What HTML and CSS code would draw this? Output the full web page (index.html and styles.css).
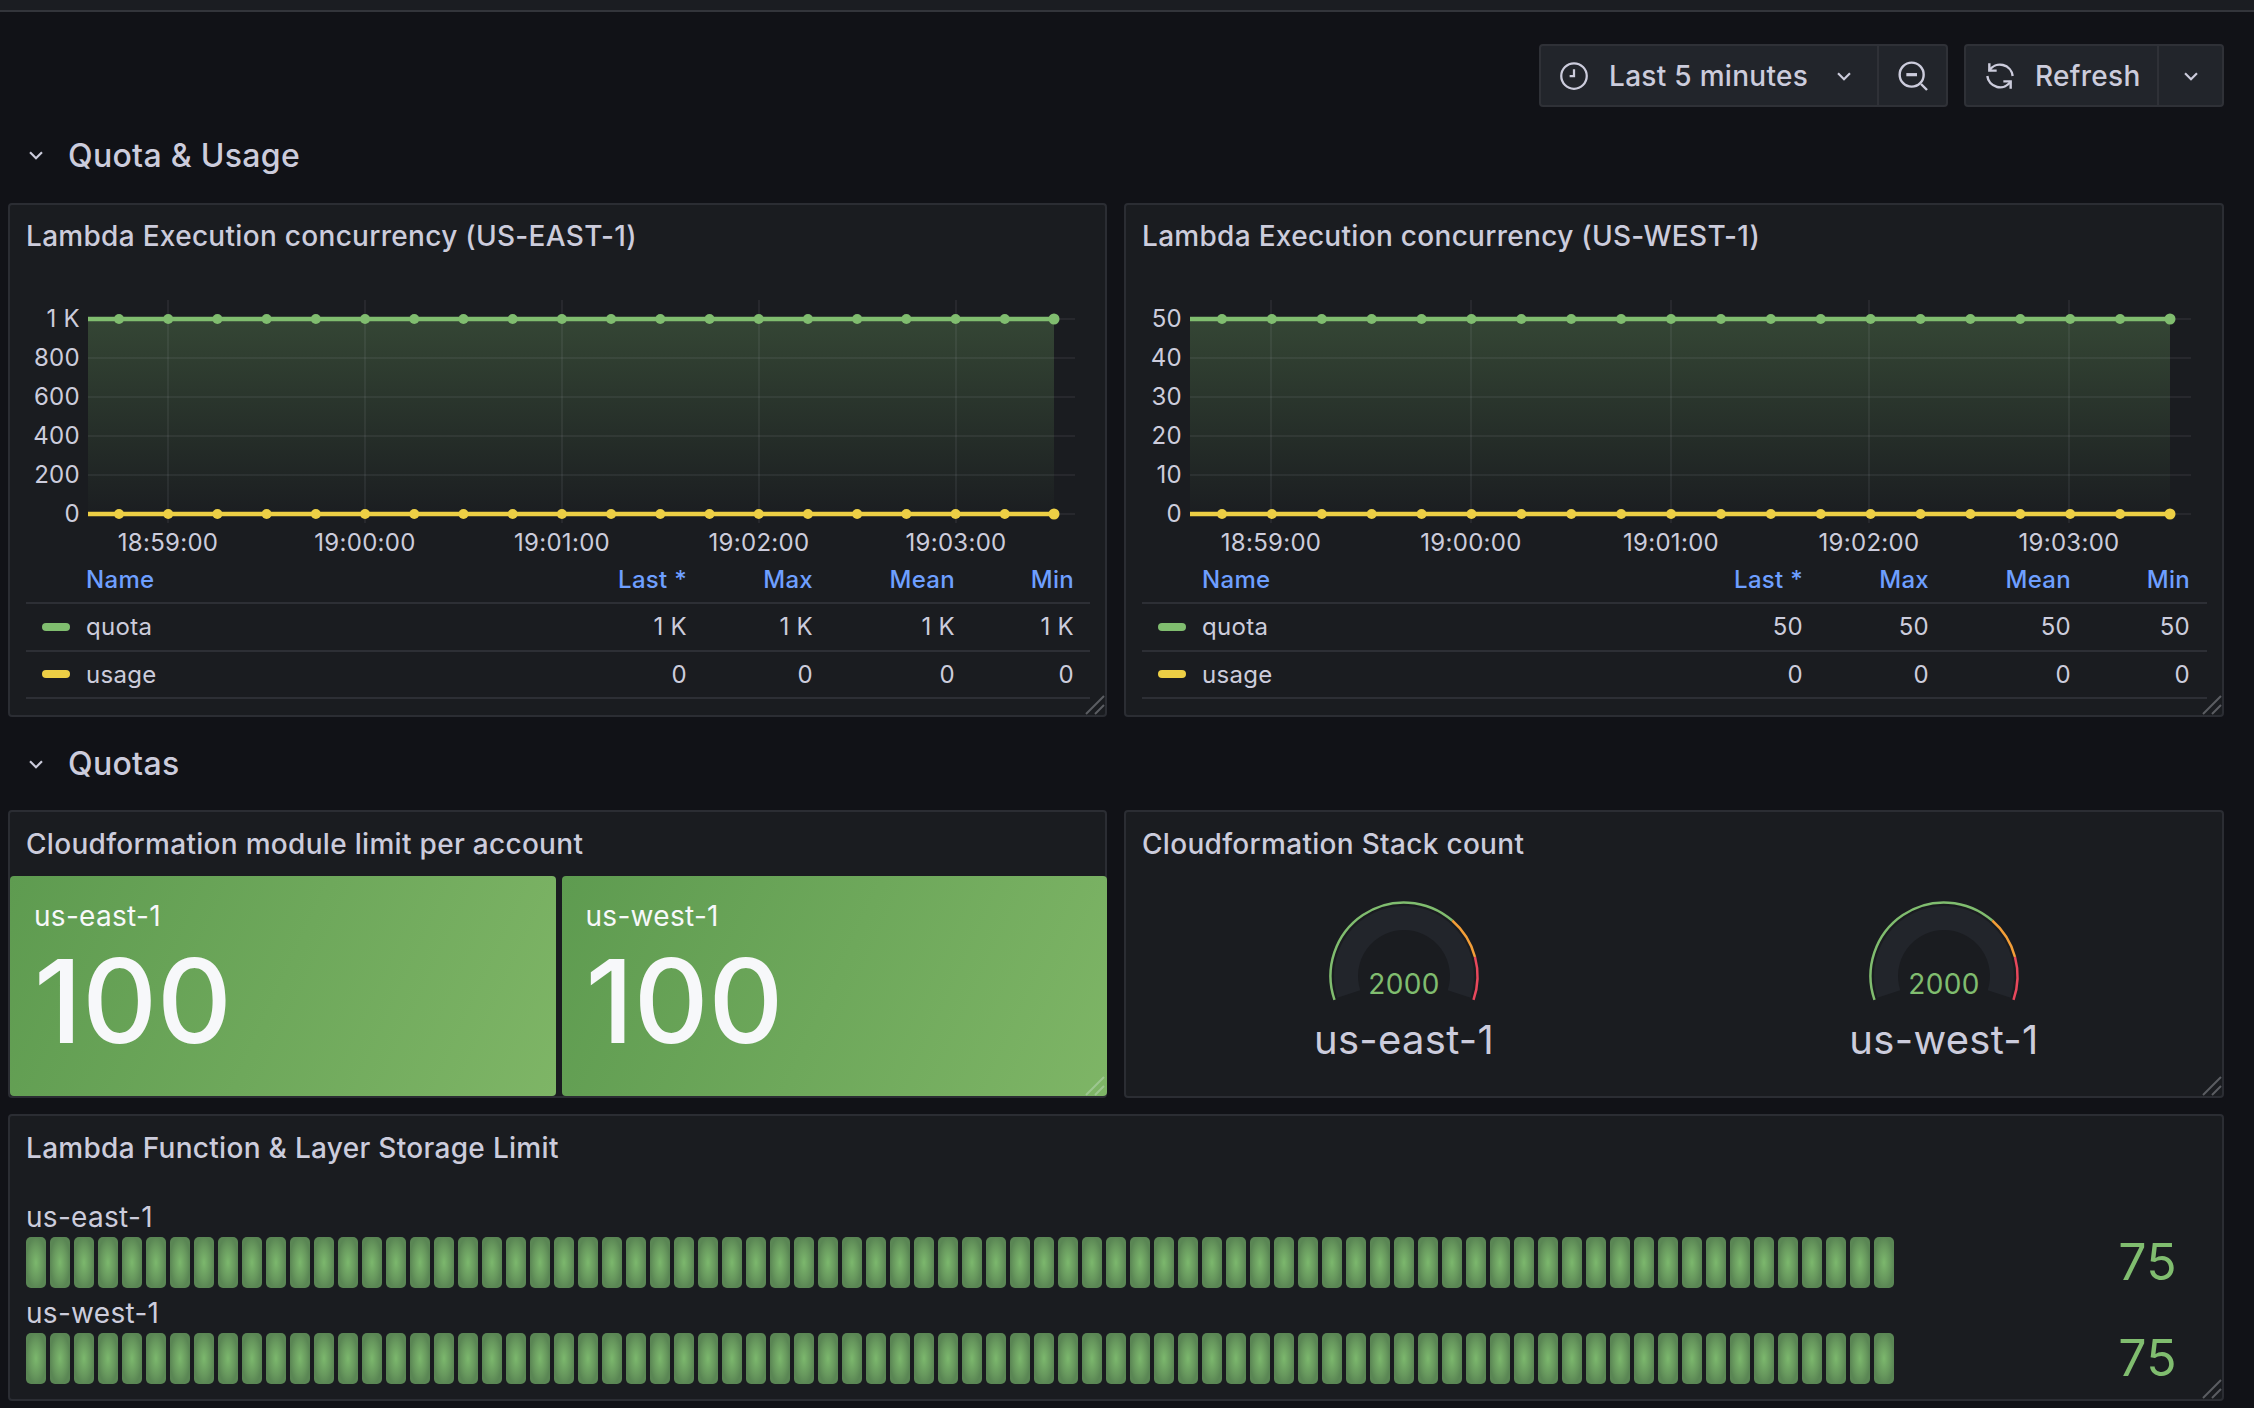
FILE: index.html
```html
<!DOCTYPE html>
<html lang="en">
<head>
    <meta charset="UTF-8">
    <title>Lambda Quotas</title>
    <link rel="stylesheet" href="styles.css">
</head>
<body>
    <div class="topbar"></div>

    <div class="page">
        <div class="toolbar">
            <div class="btn-group">
                <div class="btn btn-time">
                    <svg class="icon clock" viewBox="0 0 24 24"><circle cx="12" cy="12" r="10.200"/><path d="M12 6.500V12H8.500"/></svg>
                    <span>Last 5 minutes</span>
                    <svg class="chev chev-time" viewBox="0 0 24 24"><path d="M6.500 9.500 12 15l5.500-5.500"/></svg>
                </div>
                <div class="btn btn-zoom">
                    <svg class="icon" viewBox="0 0 24 24"><circle cx="11" cy="11" r="9"/><path d="M18 18l4.500 4.500"/><path class="thick" d="M7 11h8"/></svg>
                </div>
            </div>
            <div class="btn-group">
                <div class="btn btn-refresh">
                    <svg class="icon" viewBox="0 0 24 24"><path d="M4 2.500V8h5.500"/><path d="M4 8a9.500 9.500 0 0 1 17.500 4"/><path d="M20 21.500V16h-5.500"/><path d="M20 16A9.500 9.500 0 0 1 2.500 12"/></svg>
                    <span>Refresh</span>
                </div>
                <div class="btn btn-more">
                    <svg class="chev" viewBox="0 0 24 24"><path d="M6.500 9.500 12 15l5.500-5.500"/></svg>
                </div>
            </div>
        </div>

        <div class="row-title row-first">
            <svg class="chev" viewBox="0 0 24 24"><path d="M6.500 9.500 12 15l5.500-5.500"/></svg>
            <span>Quota &amp; Usage</span>
        </div>

        <div class="panel-row row-charts">
            <div class="panel">
                <div class="panel-title">Lambda Execution concurrency (US-EAST-1)</div>
                <div id="chartEast"></div>
                <div class="legend">
                    <div class="legend-row legend-head"><span class="name">Name</span><span>Last *</span><span>Max</span><span>Mean</span><span>Min</span></div>
                    <div class="legend-row"><span class="name"><i class="swatch green"></i>quota</span><span>1 K</span><span>1 K</span><span>1 K</span><span>1 K</span></div>
                    <div class="legend-row"><span class="name"><i class="swatch yellow"></i>usage</span><span>0</span><span>0</span><span>0</span><span>0</span></div>
                </div>
                <svg class="resize" viewBox="0 0 20 20"><path d="M1 19 19 1M10 19l9-9"/></svg>
            </div>
            <div class="panel">
                <div class="panel-title">Lambda Execution concurrency (US-WEST-1)</div>
                <div id="chartWest"></div>
                <div class="legend legend-west">
                    <div class="legend-row legend-head"><span class="name">Name</span><span>Last *</span><span>Max</span><span>Mean</span><span>Min</span></div>
                    <div class="legend-row"><span class="name"><i class="swatch green"></i>quota</span><span>50</span><span>50</span><span>50</span><span>50</span></div>
                    <div class="legend-row"><span class="name"><i class="swatch yellow"></i>usage</span><span>0</span><span>0</span><span>0</span><span>0</span></div>
                </div>
                <svg class="resize" viewBox="0 0 20 20"><path d="M1 19 19 1M10 19l9-9"/></svg>
            </div>
        </div>

        <div class="row-title row-second">
            <svg class="chev" viewBox="0 0 24 24"><path d="M6.500 9.500 12 15l5.500-5.500"/></svg>
            <span>Quotas</span>
        </div>

        <div class="panel-row row-quotas">
            <div class="panel">
                <div class="panel-title">Cloudformation module limit per account</div>
                <div class="stats">
                    <div class="stat"><div class="stat-label">us-east-1</div><div class="stat-value">100</div></div>
                    <div class="stat"><div class="stat-label">us-west-1</div><div class="stat-value">100</div></div>
                </div>
                <svg class="resize resize-light" viewBox="0 0 20 20"><path d="M1 19 19 1M10 19l9-9"/></svg>
            </div>
            <div class="panel">
                <div class="panel-title">Cloudformation Stack count</div>
                <div class="gauges">
                    <div class="gauge"><div class="gauge-dial"></div><div class="gauge-label">us-east-1</div></div>
                    <div class="gauge"><div class="gauge-dial"></div><div class="gauge-label">us-west-1</div></div>
                </div>
                <svg class="resize" viewBox="0 0 20 20"><path d="M1 19 19 1M10 19l9-9"/></svg>
            </div>
        </div>

        <div class="panel panel-wide">
            <div class="panel-title">Lambda Function &amp; Layer Storage Limit</div>
            <div class="bar-gauge">
                <div class="bar-label">us-east-1</div>
                <div class="bar-line"><div class="segments"></div><div class="bar-value">75</div></div>
            </div>
            <div class="bar-gauge">
                <div class="bar-label">us-west-1</div>
                <div class="bar-line"><div class="segments"></div><div class="bar-value">75</div></div>
            </div>
            <svg class="resize" viewBox="0 0 20 20"><path d="M1 19 19 1M10 19l9-9"/></svg>
        </div>
    </div>

    <script src="app.js"></script>
</body>
</html>
```

FILE: styles.css
```css
* {
    box-sizing: border-box;
}
body {
    font-family: Inter, "Noto Sans", sans-serif;
    margin: 0;
    padding: 0;
    background-color: #111217;
    color: #ccccdc;
    letter-spacing: 0.3px;
    overflow: hidden;
}
svg {
    display: block;
}
.topbar {
    height: 12px;
    background-color: #1b1d22;
    border-bottom: 2px solid #33353b;
}
.page {
    padding: 0 30px 0 8px;
}

/* toolbar */
.toolbar {
    display: flex;
    justify-content: flex-end;
    gap: 16px;
    margin-top: 32px;
}
.btn-group {
    display: flex;
    height: 63px;
    background-color: #22252b;
    border: 2px solid #2f3137;
    border-radius: 4px;
    font-size: 28px;
    font-weight: 500;
}
.btn {
    display: flex;
    align-items: center;
}
.btn + .btn {
    border-left: 2px solid #2f3137;
}
.icon {
    width: 32px;
    height: 32px;
    flex: none;
    fill: none;
    stroke: #ccccdc;
    stroke-width: 1.800;
}
.icon .thick {
    stroke-width: 2.400;
}
.clock {
    width: 30px;
    height: 30px;
}
.chev {
    width: 26px;
    height: 26px;
    flex: none;
    fill: none;
    stroke: #ccccdc;
    stroke-width: 2;
}
.btn-time {
    width: 336px;
    padding-left: 18px;
    gap: 20px;
}
.chev-time {
    margin-left: 3px;
}
.btn-zoom {
    width: 69px;
    justify-content: center;
}
.btn-refresh {
    width: 191px;
    padding-left: 18px;
    gap: 19px;
}
.btn-more {
    width: 65px;
    justify-content: center;
}

/* collapsible rows */
.row-title {
    display: flex;
    align-items: center;
    gap: 19px;
    padding-left: 15px;
    font-size: 32px;
    font-weight: 500;
}
.row-first {
    height: 96px;
}
.row-second {
    height: 93px;
}

/* panels */
.panel-row {
    display: grid;
    grid-template-columns: 1099px 1100px;
    gap: 17px;
}
.row-charts .panel {
    height: 514px;
}
.row-quotas .panel {
    height: 288px;
}
.panel {
    position: relative;
    background-color: #1a1c20;
    border: 2px solid #2b2d33;
    border-radius: 4px;
}
.panel-wide {
    height: 287px;
    margin-top: 16px;
}
.panel-title {
    height: 64px;
    padding: 16px 0 0 16px;
    font-size: 28px;
    line-height: 30px;
    font-weight: 500;
}
.row-quotas .panel-title,
.panel-wide .panel-title {
    padding-top: 17px;
}
.panel-wide .panel-title {
    height: 65px;
}
.resize {
    position: absolute;
    right: 0;
    bottom: 0;
    width: 20px;
    height: 20px;
    fill: none;
    stroke: #5b5d62;
    stroke-width: 2;
}
.resize-light {
    stroke: #9cc690;
}

/* timeseries */
.chart text {
    fill: #ccccdc;
    font-size: 24px;
}
.grid-line {
    stroke: rgba(204, 204, 220, 0.1);
    stroke-width: 1.500;
}

/* legend */
.legend {
    margin: 0 15px 0 16px;
    font-size: 24px;
}
.legend-row {
    display: grid;
    grid-template-columns: 1fr 126px 126px 142px 119px;
    height: 47.500px;
    padding-right: 16px;
    align-items: center;
    border-bottom: 2px solid #2d2f35;
    text-align: right;
}
.legend-west .legend-row {
    padding-right: 17px;
}
.legend-row .name {
    position: relative;
    padding-left: 60px;
    text-align: left;
}
.legend-head {
    height: 44px;
    padding-bottom: 4px;
    color: #6e9fff;
    font-weight: 500;
}
.swatch {
    position: absolute;
    left: 16px;
    top: 50%;
    width: 28px;
    height: 8px;
    margin-top: -4px;
    border-radius: 4px;
}
.green {
    background-color: #80bd6f;
}
.yellow {
    background-color: #edcf45;
}

/* stat */
.stats {
    display: grid;
    grid-template-columns: 1fr 1fr;
    gap: 6px;
    height: 220px;
    margin-right: -2px;
}
.stat {
    padding: 23px 0 0 24px;
    border-radius: 4px;
    background: linear-gradient(115deg, #5e9b50, #7eb566);
    color: #f7f8fa;
}
.stat-label {
    font-size: 28px;
    line-height: 34px;
}
.stat-value {
    margin-top: 9px;
    font-size: 116px;
    line-height: 118px;
    font-weight: 500;
    letter-spacing: 0;
}

/* gauge */
.gauges {
    display: grid;
    grid-template-columns: 1fr 1fr;
    padding: 0 8px;
}
.gauge {
    display: flex;
    flex-direction: column;
    align-items: center;
    padding-top: 21px;
}
.gauge-dial svg {
    width: 160px;
    height: 110px;
}
.gauge-dial .value {
    fill: #80bd6f;
    font-size: 28px;
    text-anchor: middle;
}
.gauge-label {
    margin-top: 9px;
    font-size: 40px;
    line-height: 48px;
}

/* bar gauge */
.bar-gauge {
    padding: 0 0 7px 16px;
}
.panel-title + .bar-gauge {
    padding-top: 18px;
}
.bar-label {
    height: 38px;
    font-size: 28px;
    line-height: 36px;
}
.bar-line {
    display: flex;
    align-items: center;
    justify-content: space-between;
    padding-right: 45px;
}
.segments {
    display: flex;
    gap: 4px;
}
.seg {
    width: 20px;
    height: 51px;
    border-radius: 5px;
    background: radial-gradient(closest-side, #7cb86d 0%, #68995e 65%, #5a8654 100%);
}
.bar-value {
    color: #80bd6f;
    font-size: 50px;
    line-height: 51px;
}
```

FILE: app.js
```js
const svgNS = 'http://www.w3.org/2000/svg';

function el(name, attrs, parent) {
    const node = document.createElementNS(svgNS, name);
    Object.keys(attrs).forEach(key => node.setAttribute(key, attrs[key]));
    parent.appendChild(node);
    return node;
}

// charts are drawn in page coordinates, the viewBox shifts them into the panel
function drawChart(id, opt) {
    const svg = el('svg', {
        class: 'chart', width: opt.width, height: 291,
        viewBox: `${opt.originX} 269 ${opt.width} 291`
    }, document.getElementById(id));

    const gradId = id + 'Fill';
    const grad = el('linearGradient', {id: gradId, x1: 0, y1: 0, x2: 0, y2: 1}, el('defs', {}, svg));
    el('stop', {offset: 0, 'stop-color': '#80bd6f', 'stop-opacity': 0.26}, grad);
    el('stop', {offset: 1, 'stop-color': '#80bd6f', 'stop-opacity': 0.01}, grad);

    const yTop = 319, yBottom = 514;
    el('rect', {x: opt.plotLeft, y: yTop, width: opt.lastX - opt.plotLeft, height: yBottom - yTop, fill: `url(#${gradId})`}, svg);

    opt.yLabels.forEach((label, i) => {
        const y = yTop + i * 39;
        el('line', {class: 'grid-line', x1: opt.plotLeft, x2: opt.gridRight, y1: y, y2: y}, svg);
        const t = el('text', {x: opt.plotLeft - 8, y: y + 8, 'text-anchor': 'end'}, svg);
        t.textContent = label;
    });

    opt.ticks.forEach((x, i) => {
        el('line', {class: 'grid-line', x1: x, x2: x, y1: 300, y2: 523}, svg);
        const t = el('text', {x: x, y: 551, 'text-anchor': 'middle'}, svg);
        t.textContent = ['18:59:00', '19:00:00', '19:01:00', '19:02:00', '19:03:00'][i];
    });

    [[yTop, '#80bd6f'], [yBottom, '#edcf45']].forEach(([y, color]) => {
        el('line', {x1: opt.plotLeft, x2: opt.lastX, y1: y, y2: y, stroke: color, 'stroke-width': 4.5}, svg);
        for (let i = 0; i < 20; i++) {
            const x = opt.firstX + (opt.lastX - opt.firstX) * i / 19;
            el('circle', {cx: x, cy: y, r: i === 19 ? 5.5 : 5, fill: color}, svg);
        }
    });
}

drawChart('chartEast', {
    originX: 10, width: 1095, plotLeft: 88, firstX: 119, lastX: 1054, gridRight: 1075,
    ticks: [168, 365, 562, 759, 956],
    yLabels: ['1 K', '800', '600', '400', '200', '0']
});
drawChart('chartWest', {
    originX: 1126, width: 1096, plotLeft: 1190, firstX: 1222, lastX: 2170, gridRight: 2191,
    ticks: [1271, 1471, 1671, 1869, 2069],
    yLabels: ['50', '40', '30', '20', '10', '0']
});

function polar(r, deg) {
    const a = (deg - 90) * Math.PI / 180;
    return [80 + r * Math.cos(a), 79 + r * Math.sin(a)];
}

function arc(r, from, to) {
    const a = polar(r, from), b = polar(r, to);
    const large = to - from > 180 ? 1 : 0;
    return `M${a[0]} ${a[1]}A${r} ${r} 0 ${large} 1 ${b[0]} ${b[1]}`;
}

document.querySelectorAll('.gauge-dial').forEach(dial => {
    const svg = el('svg', {viewBox: '0 0 160 110'}, dial);
    el('path', {d: arc(58, -108, 108), fill: 'none', stroke: '#22252b', 'stroke-width': 24}, svg);
    [[-109, 41, '#80bd6f'], [41, 75, '#f29e38'], [75, 109, '#e8485c']].forEach(([from, to, color]) => {
        el('path', {d: arc(73.5, from, to), fill: 'none', stroke: color, 'stroke-width': 2.5}, svg);
    });
    const t = el('text', {class: 'value', x: 80, y: 97}, svg);
    t.textContent = '2000';
});

document.querySelectorAll('.segments').forEach(row => {
    for (let i = 0; i < 78; i++) {
        const seg = document.createElement('div');
        seg.className = 'seg';
        row.appendChild(seg);
    }
});
```
